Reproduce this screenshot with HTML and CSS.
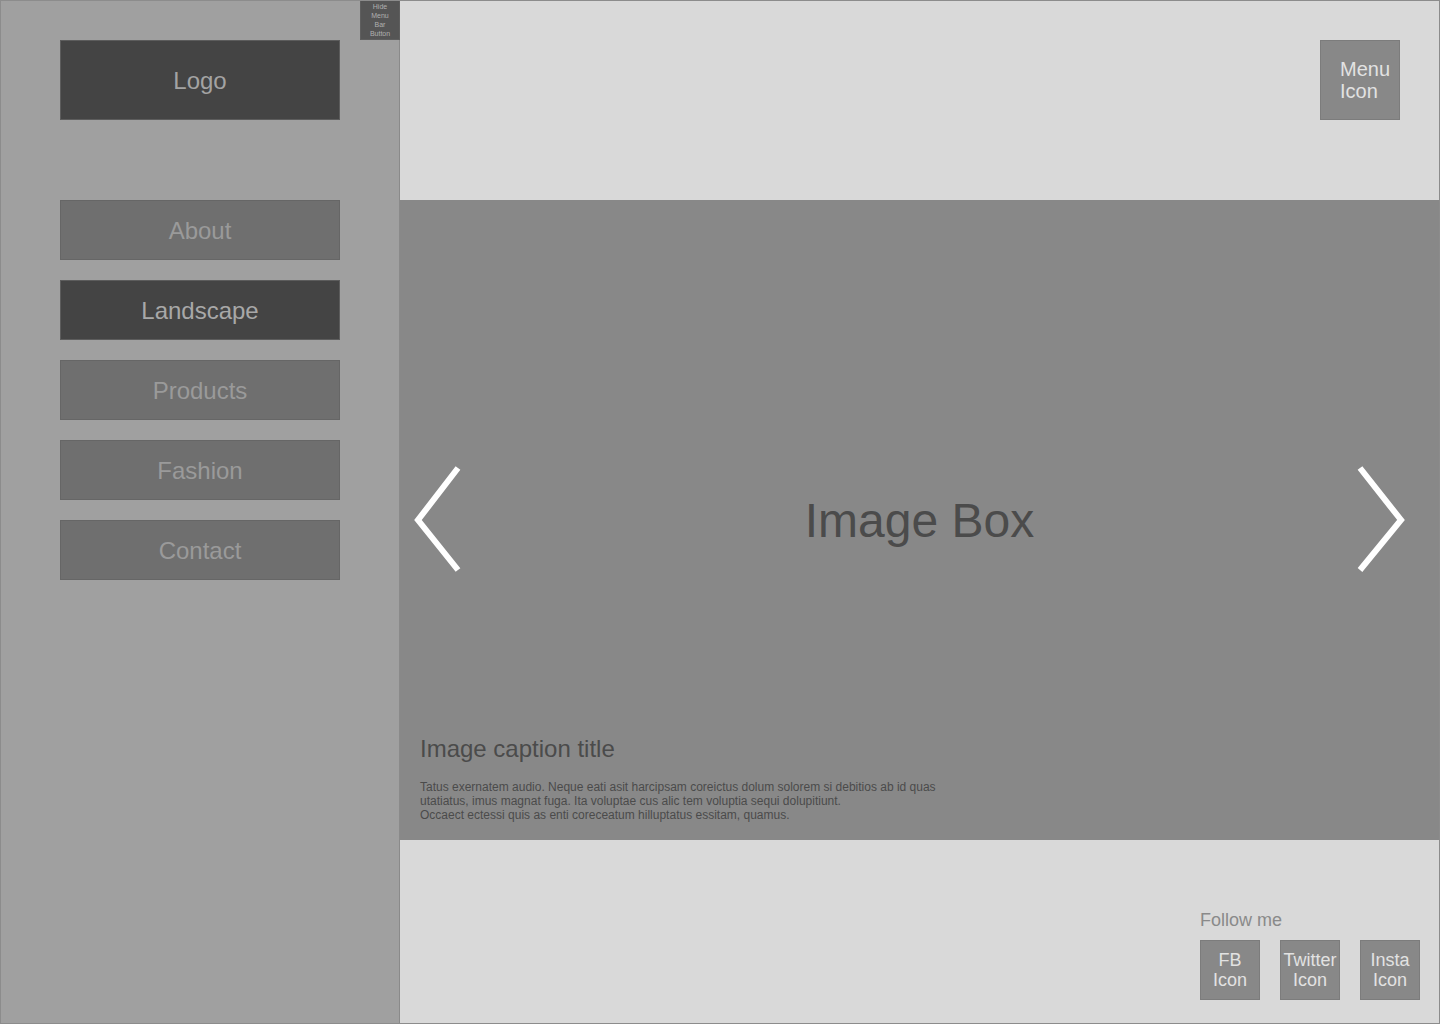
FILE: index.html
```html
<!DOCTYPE html>
<html lang="en">
<head>
<meta charset="utf-8">
<title>Portfolio Wireframe</title>
<link rel="stylesheet" href="styles.css">
</head>
<body>
<div class="page">
  <aside class="sidebar">
    <button class="hide-btn">Hide<br>Menu<br>Bar<br>Button</button>
    <div class="logo">Logo</div>
    <nav class="nav">
      <a class="nav-item">About</a>
      <a class="nav-item active">Landscape</a>
      <a class="nav-item">Products</a>
      <a class="nav-item">Fashion</a>
      <a class="nav-item">Contact</a>
    </nav>
  </aside>
  <main class="main">
    <header class="header">
      <div class="menu-icon">Menu<br>Icon</div>
    </header>
    <section class="image-box">
      <svg class="chev chev-left" width="60" height="120" viewBox="0 0 60 120"><polyline points="50,8 10,60 50,110" fill="none" stroke="#fff" stroke-width="6"/></svg>
      <div class="image-label">Image Box</div>
      <svg class="chev chev-right" width="60" height="120" viewBox="0 0 60 120"><polyline points="10,8 51,60 10,110" fill="none" stroke="#fff" stroke-width="6"/></svg>
      <div class="caption">
        <h2 class="caption-title">Image caption title</h2>
        <p class="caption-text">Tatus exernatem audio. Neque eati asit harcipsam coreictus dolum solorem si debitios ab id quas<br>utatiatus, imus magnat fuga. Ita voluptae cus alic tem voluptia sequi dolupitiunt.<br>Occaect ectessi quis as enti coreceatum hilluptatus essitam, quamus.</p>
      </div>
    </section>
    <footer class="footer">
      <div class="follow">
        <div class="follow-label">Follow me</div>
        <div class="socials">
          <div class="social">FB<br>Icon</div>
          <div class="social">Twitter<br>Icon</div>
          <div class="social">Insta<br>Icon</div>
        </div>
      </div>
    </footer>
  </main>
</div>
</body>
</html>
```

FILE: styles.css
```css
* { box-sizing: border-box; }
html, body { margin: 0; padding: 0; }
body {
  font-family: "Liberation Sans", Arial, sans-serif;
  background: #d9d9d9;
}
.page {
  width: 1440px;
  height: 1024px;
  border: 1px solid #8c8c8c;
  display: flex;
  overflow: hidden;
}
.sidebar {
  position: relative;
  width: 399px;
  flex: 0 0 399px;
  background: #a0a0a0;
  border-right: 1px solid #8a8a8a;
  padding: 39px 0 0 59px;
}
.hide-btn {
  position: absolute;
  top: -1px;
  right: -1px;
  width: 40px;
  height: 40px;
  margin: 0;
  padding: 0;
  background: #555;
  border: 1px solid #5e5e5e;
  color: #b0b0b0;
  font-family: "Liberation Sans", Arial, sans-serif;
  font-size: 7px;
  line-height: 9px;
  text-align: center;
}
.logo {
  width: 280px;
  height: 80px;
  background: #444;
  border: 1px solid #5c5c5c;
  color: #a3a3a3;
  font-size: 24px;
  padding-top: 2px;
  display: flex;
  align-items: center;
  justify-content: center;
}
.nav {
  margin-top: 80px;
  display: flex;
  flex-direction: column;
  gap: 20px;
}
.nav-item {
  width: 280px;
  height: 60px;
  background: #6f6f6f;
  border: 1px solid #666;
  color: #9a9a9a;
  font-size: 24px;
  padding-top: 2px;
  display: flex;
  align-items: center;
  justify-content: center;
}
.nav-item.active {
  background: #444;
  border-color: #5c5c5c;
  color: #a8a8a8;
}
.main {
  flex: 1;
  display: flex;
  flex-direction: column;
}
.header {
  height: 199px;
  background: #d9d9d9;
  display: flex;
  justify-content: flex-end;
  align-items: flex-start;
  padding: 39px 39px 0 0;
}
.menu-icon {
  width: 80px;
  height: 80px;
  background: #888;
  border: 1px solid #7c7c7c;
  color: #e2e2e2;
  font-size: 20px;
  line-height: 22px;
  padding-left: 19px;
  display: flex;
  align-items: center;
}
.image-box {
  height: 640px;
  background: #888;
  display: grid;
  grid-template-areas: "stack";
}
.image-box > * { grid-area: stack; }
.chev { align-self: center; }
.chev-left { justify-self: start; margin-left: 8px; }
.chev-right { justify-self: end; margin-right: 29px; }
.image-label {
  align-self: center;
  justify-self: center;
  font-size: 48px;
  color: #4b4b4b;
}
.caption {
  align-self: end;
  justify-self: start;
  padding: 0 0 18px 20px;
}
.caption-title {
  margin: 0 0 17px;
  font-size: 24px;
  font-weight: normal;
  line-height: 28px;
  color: #4b4b4b;
}
.caption-text {
  margin: 0;
  font-size: 12px;
  line-height: 14px;
  color: #4b4b4b;
}
.footer {
  flex: 1;
  background: #d9d9d9;
  display: flex;
  justify-content: flex-end;
  align-items: flex-end;
  padding: 0 19px 23px 0;
}
.follow {
  display: flex;
  flex-direction: column;
}
.follow-label {
  font-size: 18px;
  line-height: 20px;
  color: #8a8a8a;
  margin-bottom: 10px;
}
.socials {
  display: flex;
  gap: 20px;
}
.social {
  width: 60px;
  height: 60px;
  background: #888;
  border: 1px solid #7c7c7c;
  color: #e2e2e2;
  font-size: 18px;
  line-height: 20px;
  text-align: center;
  display: flex;
  align-items: center;
  justify-content: center;
}
```
